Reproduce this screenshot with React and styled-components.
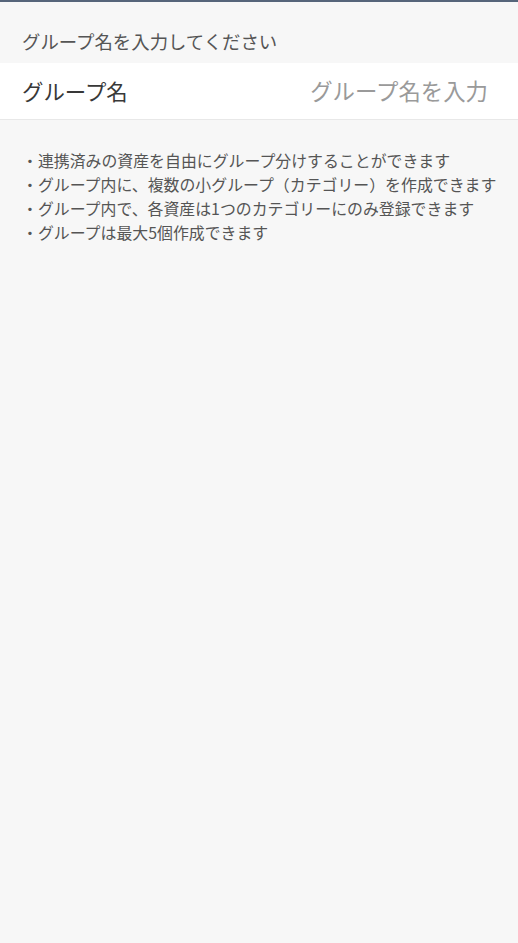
import React from "react";
import styled, { createGlobalStyle } from "styled-components";

const Global = createGlobalStyle`
  html, body { margin: 0; padding: 0; background: #f7f7f7; }
  body { font-family: "Noto Sans CJK JP", "Noto Sans", sans-serif; }
`;

const Page = styled.div`
  min-height: 943px;
  background: #f7f7f7;
  border-top: 2px solid #56657a;
  box-sizing: border-box;
`;

const SectionLabel = styled.div`
  padding: 27px 22px 0 22px;
  height: 34px;
  font-size: 18.4px;
  line-height: 24px;
  color: #555;
`;

const InputRow = styled.label`
  display: flex;
  align-items: center;
  justify-content: space-between;
  box-sizing: border-box;
  height: 57px;
  padding: 0 30px 2px 22px;
  background: #fff;
  border-bottom: 1px solid #e8e8e8;
`;

const RowLabel = styled.span`
  font-size: 21.4px;
  color: #383838;
`;

const NameInput = styled.input`
  border: none;
  outline: none;
  background: transparent;
  text-align: right;
  font-family: inherit;
  font-size: 22.4px;
  color: #383838;
  width: 230px;
  padding: 0;
  &::placeholder { color: #9a9a9a; }
`;

const Notes = styled.ul`
  list-style: none;
  margin: 0;
  padding: 29px 0 0 22px;
`;

const Note = styled.li`
  font-size: 15.9px;
  line-height: 24px;
  color: #555;
  white-space: nowrap;
`;

const notes = [
  "・連携済みの資産を自由にグループ分けすることができます",
  "・グループ内に、複数の小グループ（カテゴリー）を作成できます",
  "・グループ内で、各資産は1つのカテゴリーにのみ登録できます",
  "・グループは最大5個作成できます",
];

export default function App() {
  return (
    <>
      <Global />
      <Page>
        <SectionLabel>グループ名を入力してください</SectionLabel>
        <InputRow>
          <RowLabel>グループ名</RowLabel>
          <NameInput placeholder="グループ名を入力" />
        </InputRow>
        <Notes>
          {notes.map((n) => (
            <Note key={n}>{n}</Note>
          ))}
        </Notes>
      </Page>
    </>
  );
}
